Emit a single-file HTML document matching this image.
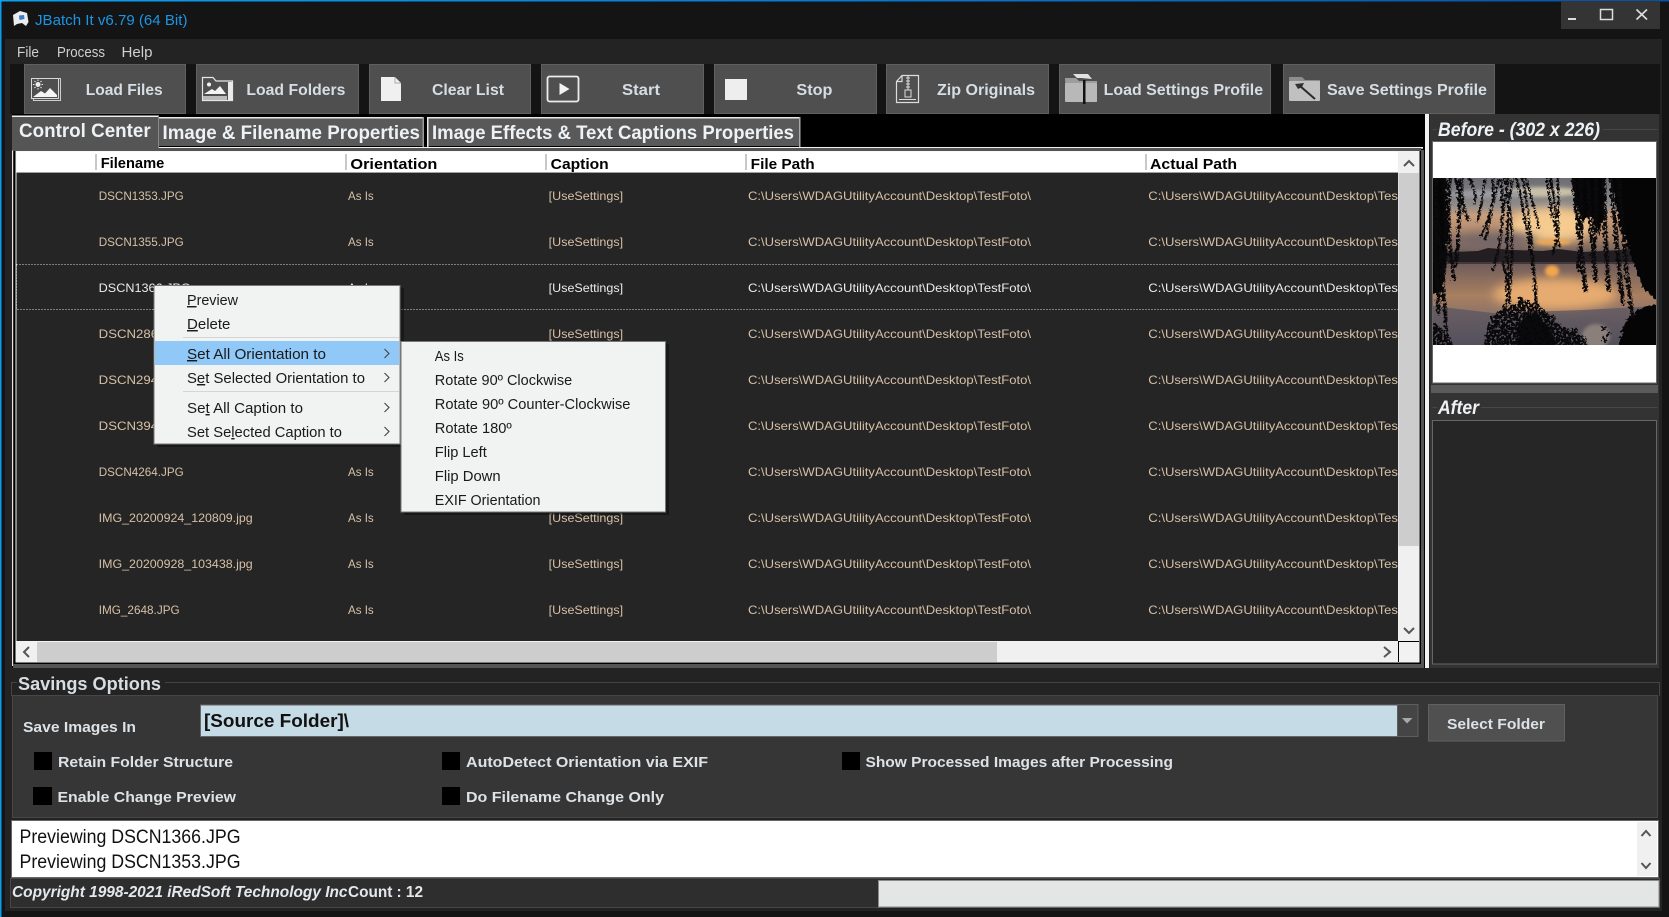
<!DOCTYPE html>
<html lang="en"><head><meta charset="utf-8"><title>JBatch It v6.79 (64 Bit)</title>
<style>
html,body{margin:0;padding:0;background:#141414;overflow:hidden}
svg{display:block}
text{font-family:"Liberation Sans",sans-serif;white-space:pre}
.tb{font-size:16px;font-weight:bold;fill:#d6dee4}
.tab{font-size:19px;font-weight:bold;fill:#eef2f5}
.hd{font-size:15px;font-weight:bold;fill:#000}
.r{font-size:12px;fill:#d6c0a6}
.s{fill:#ececec}
.m{font-size:14.5px;fill:#1a1a1a}
.cb{font-size:15px;font-weight:bold;fill:#dde2e6}
.lg{font-size:19px;fill:#111}
.ch{fill:none;stroke:#555;stroke-width:2}
</style></head><body>
<svg xmlns="http://www.w3.org/2000/svg" width="1669" height="917" viewBox="0 0 1669 917">
<defs>
<linearGradient id="top" x1="0" x2="1" y1="0" y2="0"><stop offset="0" stop-color="#0aa0f0"/><stop offset="1" stop-color="#0850a8"/></linearGradient>
<linearGradient id="sky" x1="0" x2="0" y1="0" y2="1"><stop offset="0" stop-color="#6c6c72"/><stop offset=".3" stop-color="#8f8b8a"/><stop offset=".42" stop-color="#c89e7c"/><stop offset=".66" stop-color="#a98368"/><stop offset=".85" stop-color="#665856"/><stop offset="1" stop-color="#554a4c"/></linearGradient>
<linearGradient id="wat" x1="0" x2="0" y1="0" y2="1"><stop offset="0" stop-color="#6e5c5a"/><stop offset=".4" stop-color="#a87f60"/><stop offset=".62" stop-color="#8e7468"/><stop offset="1" stop-color="#504c56"/></linearGradient>
<filter id="b4" x="-30%" y="-50%" width="160%" height="200%"><feGaussianBlur stdDeviation="5"/></filter>
<filter id="b1" x="-30%" y="-50%" width="160%" height="200%"><feGaussianBlur stdDeviation="1.5"/></filter>
<filter id="leaf" x="-5%" y="-5%" width="110%" height="110%" color-interpolation-filters="sRGB">
<feTurbulence type="fractalNoise" baseFrequency=".42" numOctaves="2" seed="4" result="n"/>
<feDisplacementMap in="SourceGraphic" in2="n" scale="7" xChannelSelector="R" yChannelSelector="G" result="d"/>
<feColorMatrix in="n" type="matrix" values="0 0 0 0 0  0 0 0 0 0  0 0 0 0 0  12 0 0 0 -4.3" result="m"/>
<feComposite in="d" in2="m" operator="in"/>
</filter>
<filter id="leaf2" x="-5%" y="-5%" width="110%" height="110%" color-interpolation-filters="sRGB">
<feTurbulence type="fractalNoise" baseFrequency=".25" numOctaves="2" seed="9" result="n"/>
<feDisplacementMap in="SourceGraphic" in2="n" scale="8" xChannelSelector="R" yChannelSelector="G"/>
</filter>
<clipPath id="cl"><rect x="16" y="172" width="1382" height="469"/></clipPath>
<clipPath id="ph"><rect x="0" y="0" width="223" height="167"/></clipPath>
</defs>

<!-- frame -->
<rect width="1669" height="917" fill="#141414"/>
<rect x="0" y="0" width="1669" height="1.5" fill="url(#top)"/>
<rect x="0" y="0" width="1.5" height="917" fill="#0a9cf0"/>
<rect x="5" y="39" width="1657" height="872" fill="#232323"/>

<!-- title bar -->
<g>
<path d="M13 15 L20 11 L27 13 L28.5 22 L26 26 L22 23 L17 24 L14 26 Z" fill="#ededed"/>
<path d="M19 15.5 L24 15 L24.5 19 L19.5 20 Z" fill="#3a7cc8"/>
</g>
<text x="35" y="25" font-size="15" fill="#1c96e4" textLength="152.5" lengthAdjust="spacingAndGlyphs">JBatch It v6.79 (64 Bit)</text>
<rect x="1561" y="1" width="99" height="28" fill="#343434"/>
<rect x="1568" y="18" width="8" height="2" fill="#ddd"/>
<rect x="1600.5" y="9.5" width="12" height="10" fill="none" stroke="#ddd" stroke-width="1.5"/>
<path d="M1636.5 9.5L1647 19.5M1647 9.5L1636.5 19.5" stroke="#ddd" stroke-width="1.7" fill="none"/>

<!-- menu -->
<text x="17" y="57" font-size="14.5" fill="#cfcfcf" textLength="22" lengthAdjust="spacingAndGlyphs">File</text>
<text x="57" y="57" font-size="14.5" fill="#cfcfcf" textLength="48" lengthAdjust="spacingAndGlyphs">Process</text>
<text x="121.5" y="57" font-size="14.5" fill="#cfcfcf" textLength="31" lengthAdjust="spacingAndGlyphs">Help</text>

<!-- toolbar -->
<rect x="10" y="64" width="1650" height="50" fill="#141414"/>
<g fill="#4f4f4f" stroke="#606060">
<rect x="24.5" y="64.5" width="161" height="49"/>
<rect x="196.5" y="64.5" width="162" height="49"/>
<rect x="369.5" y="64.5" width="161" height="49"/>
<rect x="541.5" y="64.5" width="162" height="49"/>
<rect x="714.5" y="64.5" width="162" height="49"/>
<rect x="886.5" y="64.5" width="162" height="49"/>
<rect x="1059.5" y="64.5" width="211" height="49"/>
<rect x="1283.5" y="64.5" width="211" height="49"/>
</g>
<text class="tb" x="85.7" y="95" textLength="77" lengthAdjust="spacingAndGlyphs">Load Files</text>
<text class="tb" x="246.4" y="95" textLength="99" lengthAdjust="spacingAndGlyphs">Load Folders</text>
<text class="tb" x="432" y="95" textLength="72" lengthAdjust="spacingAndGlyphs">Clear List</text>
<text class="tb" x="622" y="95" textLength="38" lengthAdjust="spacingAndGlyphs">Start</text>
<text class="tb" x="796.4" y="95" textLength="36" lengthAdjust="spacingAndGlyphs">Stop</text>
<text class="tb" x="937" y="95" textLength="98" lengthAdjust="spacingAndGlyphs">Zip Originals</text>
<text class="tb" x="1103.6" y="95" textLength="159.5" lengthAdjust="spacingAndGlyphs">Load Settings Profile</text>
<text class="tb" x="1327" y="95" textLength="160" lengthAdjust="spacingAndGlyphs">Save Settings Profile</text>

<!-- toolbar icons -->
<g>
<path d="M31.5 78.5H60.5V100.5H33.5V98" fill="none" stroke="#cfcfcf" stroke-width="1"/>
<rect x="31.5" y="78.5" width="27" height="20" fill="none" stroke="#d8d8d8" stroke-width="1"/>
<circle cx="38" cy="84.5" r="2.5" fill="#eee"/>
<path d="M38 79.5v1.5M38 88v1.5M33 84.5h1.5M41.5 84.5H43M34.5 81l1 1M40.5 87l1 1M34.5 88l1-1M40.5 82l1-1" stroke="#eee" stroke-width="1"/>
<path d="M33 97 L41 91 L45 93.5 L50 88 L57 95 L57 97Z" fill="#f4f4f4"/>
<path d="M202.5 100.5V77.5H213L216 81H232.5V100.5Z" fill="none" stroke="#e6e6e6" stroke-width="1.2"/>
<rect x="228" y="82" width="4.5" height="18" fill="#eaeaea"/>
<rect x="203" y="96" width="24" height="4" fill="#bbb"/>
<path d="M204 94 L212 89 L215 91 L220 86 L226 94Z" fill="#f4f4f4"/>
<circle cx="209" cy="84.5" r="2" fill="#f4f4f4"/>
<path d="M381 77H395L401 83V101H381Z" fill="#f0f0f0"/>
<path d="M395 77V83H401" fill="none" stroke="#aaa"/>
<rect x="547.5" y="76.5" width="31" height="25" rx="2" fill="none" stroke="#ececec" stroke-width="1.8"/>
<path d="M559.5 83V95L569.5 89Z" fill="#f2f2f2"/>
<rect x="725" y="79" width="22" height="21" fill="#eeeeee"/>
<path d="M902 75.5H918.5V102.5H896.5V81.5Z M902 75.5V81.5H896.5" fill="none" stroke="#dcdcdc" stroke-width="1.2"/>
<path d="M908 76V90M906 78h4M906 81h4M906 84h4M906 87h4" stroke="#dcdcdc" fill="none"/>
<rect x="905" y="90" width="6" height="7" fill="none" stroke="#dcdcdc"/>
<path d="M899 99.5H916" stroke="#dcdcdc"/>
<path d="M1065 78H1076L1079 81H1097V102H1066Z" fill="#9d9d9d"/>
<rect x="1065" y="83" width="32" height="19" rx="1" fill="#b8b8b8"/>
<path d="M1073 74L1088 74L1092 79L1081 78L1077 78Z" fill="#e2e2e2"/>
<rect x="1083" y="80" width="2.5" height="24" fill="#111"/>
<path d="M1289 77H1302L1305 80H1320V100H1290Z" fill="#8e8e8e"/>
<rect x="1289" y="81" width="31" height="20" rx="1" fill="#c0c0c0"/>
<path d="M1295 84L1304 83L1302 87L1298 89Z" fill="#333"/>
<path d="M1300 86L1315 99" stroke="#2a2a2a" stroke-width="2"/>
</g>

<!-- central black/tabs -->
<rect x="12" y="114" width="1413" height="554" fill="#000"/>
<rect x="1425" y="114" width="4" height="554" fill="#f2f2f2"/>
<rect x="12" y="116" width="1.2" height="550" fill="#e6e6e6"/>
<rect x="1421" y="150" width="3" height="516" fill="#555"/>
<rect x="13" y="664" width="1411" height="4" fill="#555"/>

<!-- tabs -->
<rect x="159" y="117" width="265" height="29" fill="#595959"/>
<rect x="159" y="117" width="265" height="1.5" fill="#e8e8e8"/>
<rect x="422.5" y="117" width="1.5" height="30" fill="#999"/>
<rect x="427" y="117" width="373" height="29" fill="#595959"/>
<rect x="427" y="117" width="373" height="1.5" fill="#e8e8e8"/>
<rect x="427" y="117" width="1.5" height="30" fill="#e8e8e8"/>
<rect x="799" y="117" width="1.5" height="30" fill="#aaa"/>
<rect x="159" y="147" width="1264" height="1.7" fill="#f2f2f2"/>
<rect x="12" y="115.5" width="147" height="35" fill="#555"/>
<rect x="12" y="115.5" width="147" height="1.5" fill="#efefef"/>
<rect x="158" y="116" width="1" height="32" fill="#888"/>
<rect x="13" y="148" width="1408" height="3" fill="#555"/>
<text class="tab" x="19" y="137" textLength="131.7" lengthAdjust="spacingAndGlyphs">Control Center</text>
<text class="tab" x="162.5" y="139" textLength="257.5" lengthAdjust="spacingAndGlyphs">Image &amp; Filename Properties</text>
<text class="tab" x="432" y="139" textLength="362" lengthAdjust="spacingAndGlyphs">Image Effects &amp; Text Captions Properties</text>

<!-- list -->
<rect x="15.5" y="151" width="1404" height="511.5" fill="#f2f2f2"/>
<rect x="16.5" y="172" width="1381.5" height="469" fill="#252525"/>
<rect x="16.5" y="151.5" width="1381.5" height="20.5" fill="#fff"/>
<rect x="16.5" y="172" width="1381.5" height="1" fill="#a0a0a0"/>
<g fill="#909090"><rect x="95.5" y="154" width="1" height="16"/><rect x="345.5" y="154" width="1" height="16"/><rect x="545.5" y="154" width="1" height="16"/><rect x="745.5" y="154" width="1" height="16"/><rect x="1145.5" y="154" width="1" height="16"/></g>
<text class="hd" x="100.7" y="168" textLength="63.6" lengthAdjust="spacingAndGlyphs">Filename</text>
<text class="hd" x="350.4" y="169" textLength="87" lengthAdjust="spacingAndGlyphs">Orientation</text>
<text class="hd" x="550.7" y="169" textLength="58" lengthAdjust="spacingAndGlyphs">Caption</text>
<text class="hd" x="750.7" y="169" textLength="64" lengthAdjust="spacingAndGlyphs">File Path</text>
<text class="hd" x="1150" y="169" textLength="87" lengthAdjust="spacingAndGlyphs">Actual Path</text>

<g clip-path="url(#cl)">
<g class="r">
<text class="r" x="98.7" y="200" textLength="85" lengthAdjust="spacingAndGlyphs">DSCN1353.JPG</text><text class="r" x="348" y="200" textLength="25.7" lengthAdjust="spacingAndGlyphs">As Is</text><text class="r" x="548.7" y="200" textLength="74.4" lengthAdjust="spacingAndGlyphs">[UseSettings]</text><text class="r" x="748" y="200" textLength="283" lengthAdjust="spacingAndGlyphs">C:\Users\WDAGUtilityAccount\Desktop\TestFoto\</text><text class="r" x="1148.3" y="200" textLength="283" lengthAdjust="spacingAndGlyphs">C:\Users\WDAGUtilityAccount\Desktop\TestFoto\</text>
<text class="r" x="98.7" y="246" textLength="85" lengthAdjust="spacingAndGlyphs">DSCN1355.JPG</text><text class="r" x="348" y="246" textLength="25.7" lengthAdjust="spacingAndGlyphs">As Is</text><text class="r" x="548.7" y="246" textLength="74.4" lengthAdjust="spacingAndGlyphs">[UseSettings]</text><text class="r" x="748" y="246" textLength="283" lengthAdjust="spacingAndGlyphs">C:\Users\WDAGUtilityAccount\Desktop\TestFoto\</text><text class="r" x="1148.3" y="246" textLength="283" lengthAdjust="spacingAndGlyphs">C:\Users\WDAGUtilityAccount\Desktop\TestFoto\</text>
<text class="r s" x="98.7" y="292" textLength="92" lengthAdjust="spacingAndGlyphs">DSCN1366.JPG</text><text class="r s" x="348" y="292" textLength="25.7" lengthAdjust="spacingAndGlyphs">As Is</text><text class="r s" x="548.7" y="292" textLength="74.4" lengthAdjust="spacingAndGlyphs">[UseSettings]</text><text class="r s" x="748" y="292" textLength="283" lengthAdjust="spacingAndGlyphs">C:\Users\WDAGUtilityAccount\Desktop\TestFoto\</text><text class="r s" x="1148.3" y="292" textLength="283" lengthAdjust="spacingAndGlyphs">C:\Users\WDAGUtilityAccount\Desktop\TestFoto\</text>
<text class="r" x="98.7" y="338" textLength="96" lengthAdjust="spacingAndGlyphs">DSCN2868.JPG</text><text class="r" x="548.7" y="338" textLength="74.4" lengthAdjust="spacingAndGlyphs">[UseSettings]</text><text class="r" x="748" y="338" textLength="283" lengthAdjust="spacingAndGlyphs">C:\Users\WDAGUtilityAccount\Desktop\TestFoto\</text><text class="r" x="1148.3" y="338" textLength="283" lengthAdjust="spacingAndGlyphs">C:\Users\WDAGUtilityAccount\Desktop\TestFoto\</text>
<text class="r" x="98.7" y="384" textLength="96" lengthAdjust="spacingAndGlyphs">DSCN2945.JPG</text><text class="r" x="748" y="384" textLength="283" lengthAdjust="spacingAndGlyphs">C:\Users\WDAGUtilityAccount\Desktop\TestFoto\</text><text class="r" x="1148.3" y="384" textLength="283" lengthAdjust="spacingAndGlyphs">C:\Users\WDAGUtilityAccount\Desktop\TestFoto\</text>
<text class="r" x="98.7" y="430" textLength="96" lengthAdjust="spacingAndGlyphs">DSCN3945.JPG</text><text class="r" x="748" y="430" textLength="283" lengthAdjust="spacingAndGlyphs">C:\Users\WDAGUtilityAccount\Desktop\TestFoto\</text><text class="r" x="1148.3" y="430" textLength="283" lengthAdjust="spacingAndGlyphs">C:\Users\WDAGUtilityAccount\Desktop\TestFoto\</text>
<text class="r" x="98.7" y="476" textLength="85" lengthAdjust="spacingAndGlyphs">DSCN4264.JPG</text><text class="r" x="348" y="476" textLength="25.7" lengthAdjust="spacingAndGlyphs">As Is</text><text class="r" x="748" y="476" textLength="283" lengthAdjust="spacingAndGlyphs">C:\Users\WDAGUtilityAccount\Desktop\TestFoto\</text><text class="r" x="1148.3" y="476" textLength="283" lengthAdjust="spacingAndGlyphs">C:\Users\WDAGUtilityAccount\Desktop\TestFoto\</text>
<text class="r" x="98.7" y="522" textLength="154" lengthAdjust="spacingAndGlyphs">IMG_20200924_120809.jpg</text><text class="r" x="348" y="522" textLength="25.7" lengthAdjust="spacingAndGlyphs">As Is</text><text class="r" x="548.7" y="522" textLength="74.4" lengthAdjust="spacingAndGlyphs">[UseSettings]</text><text class="r" x="748" y="522" textLength="283" lengthAdjust="spacingAndGlyphs">C:\Users\WDAGUtilityAccount\Desktop\TestFoto\</text><text class="r" x="1148.3" y="522" textLength="283" lengthAdjust="spacingAndGlyphs">C:\Users\WDAGUtilityAccount\Desktop\TestFoto\</text>
<text class="r" x="98.7" y="568" textLength="154" lengthAdjust="spacingAndGlyphs">IMG_20200928_103438.jpg</text><text class="r" x="348" y="568" textLength="25.7" lengthAdjust="spacingAndGlyphs">As Is</text><text class="r" x="548.7" y="568" textLength="74.4" lengthAdjust="spacingAndGlyphs">[UseSettings]</text><text class="r" x="748" y="568" textLength="283" lengthAdjust="spacingAndGlyphs">C:\Users\WDAGUtilityAccount\Desktop\TestFoto\</text><text class="r" x="1148.3" y="568" textLength="283" lengthAdjust="spacingAndGlyphs">C:\Users\WDAGUtilityAccount\Desktop\TestFoto\</text>
<text class="r" x="98.7" y="614" textLength="81" lengthAdjust="spacingAndGlyphs">IMG_2648.JPG</text><text class="r" x="348" y="614" textLength="25.7" lengthAdjust="spacingAndGlyphs">As Is</text><text class="r" x="548.7" y="614" textLength="74.4" lengthAdjust="spacingAndGlyphs">[UseSettings]</text><text class="r" x="748" y="614" textLength="283" lengthAdjust="spacingAndGlyphs">C:\Users\WDAGUtilityAccount\Desktop\TestFoto\</text><text class="r" x="1148.3" y="614" textLength="283" lengthAdjust="spacingAndGlyphs">C:\Users\WDAGUtilityAccount\Desktop\TestFoto\</text>
</g>
<rect x="16.5" y="264.5" width="1390" height="45" fill="none" stroke="#d8d8d8" stroke-dasharray="1 2" shape-rendering="crispEdges"/>
</g>

<!-- scrollbars -->
<rect x="1398" y="151.5" width="21" height="490" fill="#f0f0f0"/>
<rect x="1398.5" y="173" width="20.5" height="373" fill="#cdcdcd"/>
<path class="ch" d="M1404 166L1409 161L1414 166"/>
<path class="ch" d="M1404 628L1409 633L1414 628"/>
<rect x="16.5" y="642" width="1381.5" height="20" fill="#f0f0f0"/>
<rect x="37" y="642" width="960" height="20" fill="#cdcdcd"/>
<path class="ch" d="M29 647L24 652L29 657"/>
<path class="ch" d="M1384 647L1390 652L1384 657"/>
<rect x="1398" y="641" width="1" height="21" fill="#000"/>
<rect x="1398" y="641" width="21" height="1" fill="#000"/>

<!-- before / after panels -->
<rect x="1430" y="114" width="229" height="554" fill="#333"/>
<path d="M1432.5 129.5H1437M1603 129.5H1657.5" stroke="#474747" fill="none"/>
<text x="1438" y="136" font-size="19" font-weight="bold" font-style="italic" fill="#eef2f5" textLength="162" lengthAdjust="spacingAndGlyphs">Before - (302 x 226)</text>
<rect x="1432.5" y="141.5" width="224" height="241.5" fill="#fff" stroke="#666"/>

<g transform="translate(1433 178)" clip-path="url(#ph)">
<rect width="223" height="90" fill="url(#sky)"/>
<ellipse cx="118" cy="47" rx="42" ry="17" fill="#f5cb90" filter="url(#b4)"/>
<ellipse cx="110" cy="14" rx="38" ry="5" fill="#c9c0a8" filter="url(#b1)"/>
<ellipse cx="55" cy="16" rx="40" ry="4" fill="#9a9aa0" filter="url(#b1)"/>
<ellipse cx="60" cy="62" rx="45" ry="7" fill="#6f6468" filter="url(#b4)"/>
<ellipse cx="120" cy="64" rx="18" ry="3" fill="#eda858" filter="url(#b1)"/>
<rect y="85" width="223" height="82" fill="url(#wat)"/>
<ellipse cx="122" cy="116" rx="62" ry="16" fill="#e6ab70" filter="url(#b4)"/>
<ellipse cx="119" cy="93" rx="7" ry="6" fill="#f3a550" filter="url(#b1)"/>
<path d="M0 76L20 74L45 73L55 70L80 72L110 73L125 71L150 74L223 70V86L0 85Z" fill="#231e22"/>
<rect y="84" width="223" height="2" fill="#44383a"/>
<path d="M0 128L60 135L150 132L223 128V167H0Z" fill="#56535f" opacity=".7"/>
<ellipse cx="163" cy="158" rx="14" ry="12" fill="#8a7f7a" filter="url(#b1)"/>

<g filter="url(#leaf2)" fill="#060506">
<path d="M176 -8H232V128L210 110L198 78L186 44Z"/>
<path d="M138 -8H172V30L166 58L158 36L150 44L142 24Z"/>
<path d="M-6 -8H12L16 50L10 112L-6 120Z"/>
<path d="M232 124V176H182L192 144L208 130Z"/>
<path d="M84 168V150L94 136L108 140L118 152L124 168Z"/>
</g>

<g filter="url(#leaf)">
<g fill="none" stroke="#0a090b" stroke-linecap="round">
<g stroke-width="4">
<path d="M4 0Q1 50 6 135"/><path d="M11 0Q16 40 9 118"/><path d="M17 0Q13 50 21 100"/><path d="M24 0Q29 30 23 88"/><path d="M29 0Q26 24 36 42"/><path d="M2 0Q8 80 14 160"/>
</g>
<g stroke-width="2.6">
<path d="M36 0Q44 12 42 26"/><path d="M52 0Q50 25 44 44"/><path d="M60 0Q62 30 52 62"/><path d="M66 0Q58 40 48 58"/><path d="M68 0Q74 50 60 92"/><path d="M72 0Q84 60 76 118"/><path d="M76 0Q70 30 68 60"/><path d="M84 0Q92 40 100 84"/><path d="M80 0Q70 50 78 135"/><path d="M90 0Q99 50 103 125"/><path d="M93 0Q100 24 106 50"/><path d="M114 0Q119 40 127 68"/><path d="M118 0Q124 40 126 60"/><path d="M125 0Q128 60 120 75"/><path d="M70 85Q78 110 72 130"/><path d="M100 88Q104 110 103 126"/>
</g>
<g stroke-width="4.4">
<path d="M141 0Q145 50 153 112"/><path d="M148 0Q150 45 146 92"/><path d="M155 0Q158 50 163 102"/><path d="M163 0Q165 40 160 78"/><path d="M171 0Q172 60 176 112"/><path d="M178 0Q184 70 190 125"/><path d="M186 0Q190 70 200 140"/>
</g>
</g>
<g fill="#0a090b">
<path d="M54 150L62 136L78 128L94 122L110 130L122 144L136 152L153 160L156 175H50Z"/>
<circle cx="72" cy="130" r="3"/><circle cx="88" cy="122" r="3"/><circle cx="104" cy="127" r="3"/><circle cx="120" cy="140" r="3"/><circle cx="142" cy="153" r="3"/><circle cx="60" cy="140" r="3"/>
<circle cx="171" cy="150" r="2.5"/><circle cx="176" cy="156" r="2.5"/><circle cx="172" cy="162" r="2.5"/>
<path d="M-5 140L8 150L16 158L24 175H-5Z"/>
</g>
</g>
</g>

<rect x="1431" y="385" width="227" height="8" fill="#5a5a5a"/>
<path d="M1432.5 407.5H1437M1481 407.5H1657.5" stroke="#474747" fill="none"/>
<text x="1438" y="414" font-size="19" font-weight="bold" font-style="italic" fill="#eef2f5" textLength="41" lengthAdjust="spacingAndGlyphs">After</text>
<rect x="1432.5" y="420.5" width="224" height="243.5" fill="#262626" stroke="#666"/>

<!-- savings options -->
<path d="M11.5 696V682.5H17M165 682.5H1659.5V696" fill="none" stroke="#444"/>
<text x="18" y="690" font-size="18.5" font-weight="bold" fill="#d8dde2" textLength="143" lengthAdjust="spacingAndGlyphs">Savings Options</text>
<rect x="12.5" y="695.5" width="1645" height="122" fill="#363636" stroke="#474747"/>
<text x="23" y="732" class="cb" textLength="113" lengthAdjust="spacingAndGlyphs">Save Images In</text>
<rect x="200.5" y="705" width="1197" height="31.5" fill="#c5dbe6" stroke="#666"/>
<text x="204" y="727" font-size="18" font-weight="bold" fill="#111" textLength="145" lengthAdjust="spacingAndGlyphs">[Source Folder]\</text>
<rect x="1397.5" y="704.5" width="20.5" height="32" fill="#454545" stroke="#5e5e5e"/>
<path d="M1402 718H1412.5L1407 723.5Z" fill="#a8a8a8"/>
<rect x="1428.5" y="704.5" width="136" height="36.5" fill="#505050" stroke="#606060"/>
<text x="1447" y="729" class="cb" textLength="98" lengthAdjust="spacingAndGlyphs">Select Folder</text>

<g fill="#000"><rect x="34" y="752" width="18" height="18"/><rect x="33" y="787" width="19" height="18"/><rect x="442" y="752" width="18" height="18"/><rect x="442" y="787" width="18" height="18"/><rect x="842" y="752" width="18" height="18"/></g>
<text x="58" y="767" class="cb" textLength="175" lengthAdjust="spacingAndGlyphs">Retain Folder Structure</text>
<text x="57.5" y="802" class="cb" textLength="178.5" lengthAdjust="spacingAndGlyphs">Enable Change Preview</text>
<text x="466" y="767" class="cb" textLength="242" lengthAdjust="spacingAndGlyphs">AutoDetect Orientation via EXIF</text>
<text x="466" y="802" class="cb" textLength="198" lengthAdjust="spacingAndGlyphs">Do Filename Change Only</text>
<text x="865.5" y="767" class="cb" textLength="307.5" lengthAdjust="spacingAndGlyphs">Show Processed Images after Processing</text>

<!-- log -->
<rect x="11" y="820" width="1648" height="58" fill="#666"/>
<rect x="12" y="821" width="1646" height="56" fill="#fff"/>
<rect x="1637" y="822" width="20" height="54" fill="#f0f0f0"/>
<path class="ch" d="M1641.5 836L1646 831L1650.5 836"/>
<path class="ch" d="M1641.5 863L1646 868L1650.5 863"/>
<text class="lg" x="19.5" y="843" textLength="221" lengthAdjust="spacingAndGlyphs">Previewing DSCN1366.JPG</text>
<text class="lg" x="19.5" y="868" textLength="221" lengthAdjust="spacingAndGlyphs">Previewing DSCN1353.JPG</text>

<!-- status -->
<rect x="10.5" y="878.5" width="1649" height="29" fill="#2e2e2e" stroke="#474747"/>
<text x="12" y="897" font-size="15.5" font-weight="bold" font-style="italic" fill="#e4e8ec" textLength="335.5" lengthAdjust="spacingAndGlyphs">Copyright 1998-2021 iRedSoft Technology Inc</text>
<text x="348" y="897" font-size="15.5" font-weight="bold" fill="#e4e8ec" textLength="75" lengthAdjust="spacingAndGlyphs">Count : 12</text>
<rect x="878.5" y="880.5" width="780.5" height="26.5" fill="#e4e6e5" stroke="#8a8a8a"/>

<!-- context menu -->
<rect x="157" y="288" width="247" height="159" fill="#000" opacity=".35"/>
<rect x="154" y="285.5" width="246" height="158.5" fill="#f1f2f2" stroke="#777"/>
<rect x="155" y="341" width="244" height="24" fill="#90c8f8"/>
<rect x="183" y="337" width="216" height="1" fill="#d5d5d5"/>
<rect x="183" y="391" width="216" height="1" fill="#d5d5d5"/>
<text class="m" x="187" y="305" textLength="51" lengthAdjust="spacingAndGlyphs"><tspan text-decoration="underline">P</tspan>review</text>
<text class="m" x="187" y="329" textLength="43.4" lengthAdjust="spacingAndGlyphs"><tspan text-decoration="underline">D</tspan>elete</text>
<text class="m" x="187" y="359" textLength="139" lengthAdjust="spacingAndGlyphs"><tspan text-decoration="underline">S</tspan>et All Orientation to</text>
<text class="m" x="187" y="383" textLength="178" lengthAdjust="spacingAndGlyphs">S<tspan text-decoration="underline">e</tspan>t Selected Orientation to</text>
<text class="m" x="187" y="413" textLength="116" lengthAdjust="spacingAndGlyphs">Se<tspan text-decoration="underline">t</tspan> All Caption to</text>
<text class="m" x="187" y="437" textLength="155" lengthAdjust="spacingAndGlyphs">Set Se<tspan text-decoration="underline">l</tspan>ected Caption to</text>
<g fill="none" stroke="#444" stroke-width="1.1">
<path d="M384.5 349L389 353.5L384.5 358"/><path d="M384.5 373L389 377.5L384.5 382"/><path d="M384.5 403L389 407.5L384.5 412"/><path d="M384.5 427L389 431.5L384.5 436"/>
</g>

<rect x="404" y="344" width="265" height="171" fill="#000" opacity=".35"/>
<rect x="401" y="341.5" width="264.5" height="170.5" fill="#f1f2f2" stroke="#777"/>
<text class="m" x="434.8" y="361" textLength="29" lengthAdjust="spacingAndGlyphs">As Is</text>
<text class="m" x="434.8" y="385" textLength="137.4" lengthAdjust="spacingAndGlyphs">Rotate 90º Clockwise</text>
<text class="m" x="434.8" y="409" textLength="195.6" lengthAdjust="spacingAndGlyphs">Rotate 90º Counter-Clockwise</text>
<text class="m" x="434.8" y="433" textLength="77" lengthAdjust="spacingAndGlyphs">Rotate 180º</text>
<text class="m" x="434.8" y="457" textLength="52" lengthAdjust="spacingAndGlyphs">Flip Left</text>
<text class="m" x="434.8" y="481" textLength="65.8" lengthAdjust="spacingAndGlyphs">Flip Down</text>
<text class="m" x="434.8" y="505" textLength="105.7" lengthAdjust="spacingAndGlyphs">EXIF Orientation</text>
</svg>
</body></html>
